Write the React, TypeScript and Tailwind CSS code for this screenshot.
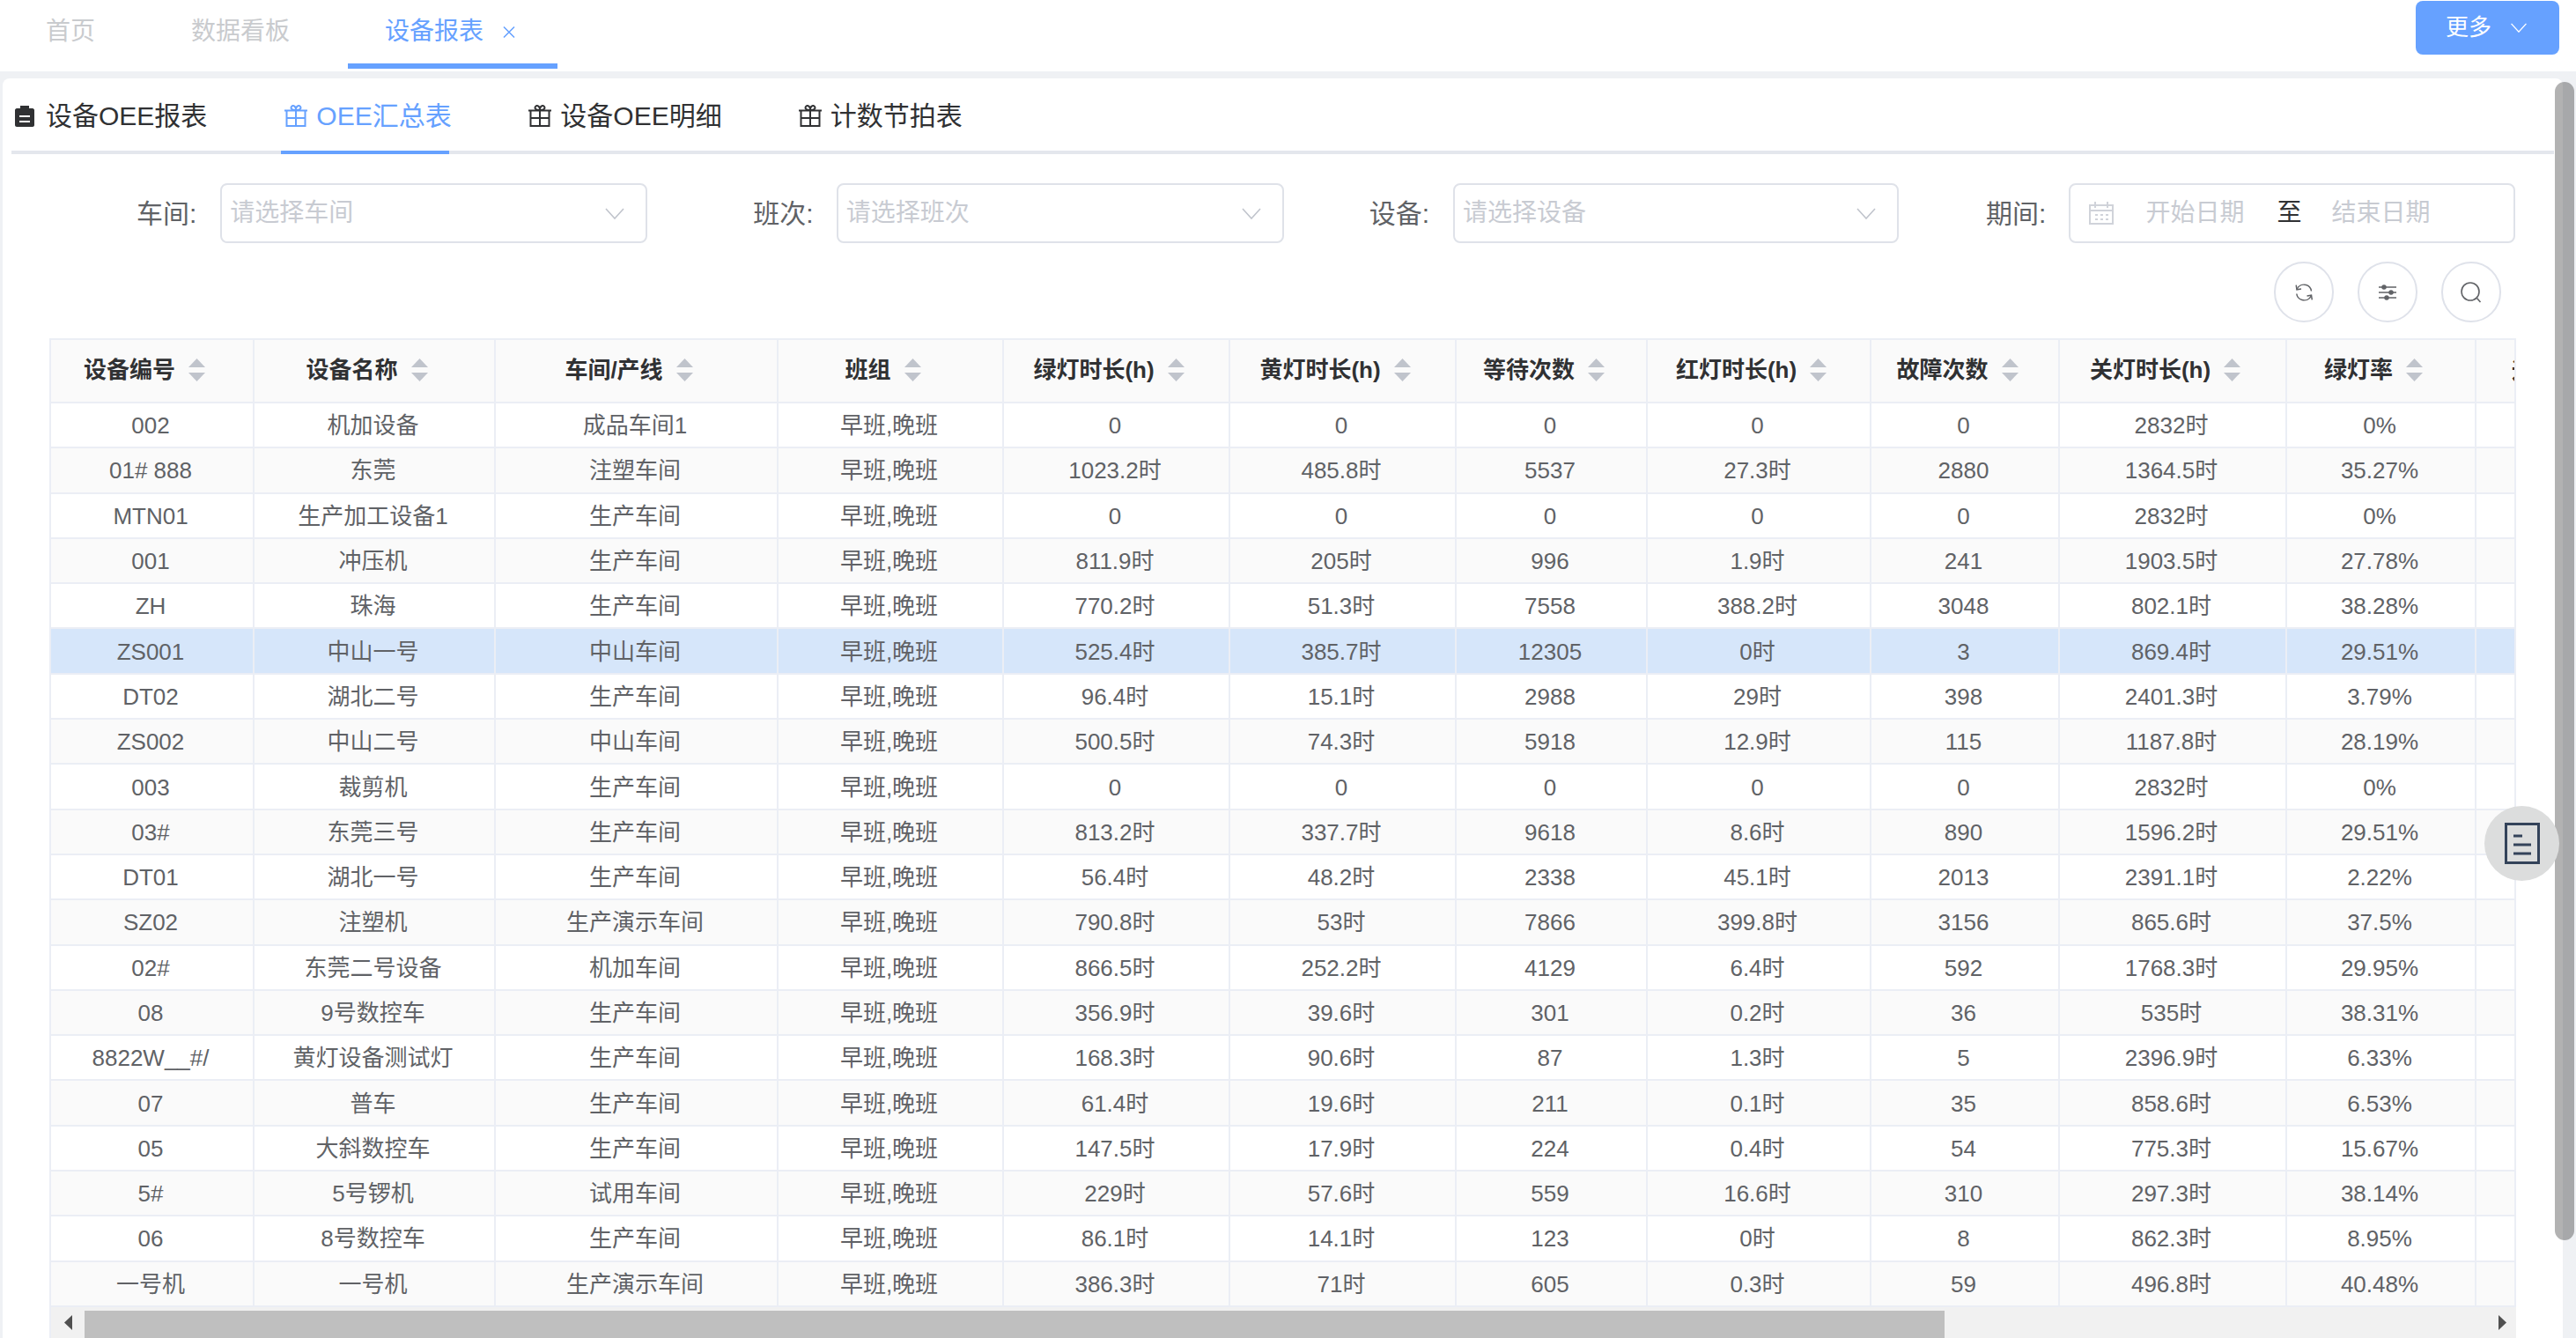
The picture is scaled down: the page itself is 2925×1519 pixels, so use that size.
import React from "react";

const GRID =
  "grid grid-cols-[231px_274px_321px_256px_257px_257px_217px_254px_214px_258px_215px_45px]";

const HEADERS = [
  "设备编号",
  "设备名称",
  "车间/产线",
  "班组",
  "绿灯时长(h)",
  "黄灯时长(h)",
  "等待次数",
  "红灯时长(h)",
  "故障次数",
  "关灯时长(h)",
  "绿灯率",
];

const ROWS: string[][] = [
  ["002", "机加设备", "成品车间1", "早班,晚班", "0", "0", "0", "0", "0", "2832时", "0%"],
  ["01# 888", "东莞", "注塑车间", "早班,晚班", "1023.2时", "485.8时", "5537", "27.3时", "2880", "1364.5时", "35.27%"],
  ["MTN01", "生产加工设备1", "生产车间", "早班,晚班", "0", "0", "0", "0", "0", "2832时", "0%"],
  ["001", "冲压机", "生产车间", "早班,晚班", "811.9时", "205时", "996", "1.9时", "241", "1903.5时", "27.78%"],
  ["ZH", "珠海", "生产车间", "早班,晚班", "770.2时", "51.3时", "7558", "388.2时", "3048", "802.1时", "38.28%"],
  ["ZS001", "中山一号", "中山车间", "早班,晚班", "525.4时", "385.7时", "12305", "0时", "3", "869.4时", "29.51%"],
  ["DT02", "湖北二号", "生产车间", "早班,晚班", "96.4时", "15.1时", "2988", "29时", "398", "2401.3时", "3.79%"],
  ["ZS002", "中山二号", "中山车间", "早班,晚班", "500.5时", "74.3时", "5918", "12.9时", "115", "1187.8时", "28.19%"],
  ["003", "裁剪机", "生产车间", "早班,晚班", "0", "0", "0", "0", "0", "2832时", "0%"],
  ["03#", "东莞三号", "生产车间", "早班,晚班", "813.2时", "337.7时", "9618", "8.6时", "890", "1596.2时", "29.51%"],
  ["DT01", "湖北一号", "生产车间", "早班,晚班", "56.4时", "48.2时", "2338", "45.1时", "2013", "2391.1时", "2.22%"],
  ["SZ02", "注塑机", "生产演示车间", "早班,晚班", "790.8时", "53时", "7866", "399.8时", "3156", "865.6时", "37.5%"],
  ["02#", "东莞二号设备", "机加车间", "早班,晚班", "866.5时", "252.2时", "4129", "6.4时", "592", "1768.3时", "29.95%"],
  ["08", "9号数控车", "生产车间", "早班,晚班", "356.9时", "39.6时", "301", "0.2时", "36", "535时", "38.31%"],
  ["8822W__#/", "黄灯设备测试灯", "生产车间", "早班,晚班", "168.3时", "90.6时", "87", "1.3时", "5", "2396.9时", "6.33%"],
  ["07", "普车", "生产车间", "早班,晚班", "61.4时", "19.6时", "211", "0.1时", "35", "858.6时", "6.53%"],
  ["05", "大斜数控车", "生产车间", "早班,晚班", "147.5时", "17.9时", "224", "0.4时", "54", "775.3时", "15.67%"],
  ["5#", "5号锣机", "试用车间", "早班,晚班", "229时", "57.6时", "559", "16.6时", "310", "297.3时", "38.14%"],
  ["06", "8号数控车", "生产车间", "早班,晚班", "86.1时", "14.1时", "123", "0时", "8", "862.3时", "8.95%"],
  ["一号机", "一号机", "生产演示车间", "早班,晚班", "386.3时", "71时", "605", "0.3时", "59", "496.8时", "40.48%"],
];

function Chevron({ className }: { className: string }) {
  return (
    <svg viewBox="0 0 22 13" className={className} fill="none" stroke="currentColor" strokeWidth="1.6">
      <path d="M1 1 L11 12 L21 1" />
    </svg>
  );
}

function GiftIcon() {
  return (
    <svg viewBox="0 0 26 25" className="w-[26px] h-[25px] shrink-0" fill="none" stroke="currentColor" strokeWidth="2">
      <path d="M0 6.5H26M2.5 6.5V24H23.5V6.5M13 6.5V24M2.5 15H23.5" />
      <path d="M13 6C9.5 6 7.5 5 7.5 3.2C7.5 1.4 9.4 .5 11 1.3C12.4 2 13 3.6 13 6C13 3.6 13.6 2 15 1.3C16.6 .5 18.5 1.4 18.5 3.2C18.5 5 16.5 6 13 6Z" />
    </svg>
  );
}

function ClipIcon() {
  return (
    <svg viewBox="0 0 22 24" className="w-[22px] h-[24px] shrink-0">
      <path
        fill="#303133"
        d="M6 0H16V3H20C21 3 22 4 22 5V22C22 23 21 24 20 24H2C1 24 0 23 0 22V5C0 4 1 3 2 3H6Z"
      />
      <path fill="#fff" d="M5 11H17V13H5ZM5 17H17V19H5Z" />
    </svg>
  );
}

function SortCarets() {
  return (
    <span className="flex flex-col items-center gap-[6px] w-[49px] shrink-0">
      <svg viewBox="0 0 19 10" className="w-[19px] h-[10px]">
        <path d="M9.5 0L19 10H0Z" fill="#c0c4cc" />
      </svg>
      <svg viewBox="0 0 19 10" className="w-[19px] h-[10px]">
        <path d="M9.5 10L19 0H0Z" fill="#c0c4cc" />
      </svg>
    </span>
  );
}

function SelectBox({ placeholder, width }: { placeholder: string; width: string }) {
  return (
    <div
      className={`${width} h-[68px] shrink-0 rounded-lg border-2 border-[#dfe2e9] flex items-center justify-between pl-[9px] pr-[24px] text-[28px] text-[#c8cbd2]`}
    >
      <span>{placeholder}</span>
      <Chevron className="w-[22px] h-[13px] text-[#c0c4cc]" />
    </div>
  );
}

function CircleButton({ children }: { children: React.ReactNode }) {
  return (
    <button className="w-[68px] h-[69px] rounded-full border-2 border-[#dfe2ea] bg-white flex items-center justify-center text-[#606266]">
      {children}
    </button>
  );
}

export default function App() {
  return (
    <div className="relative w-[2925px] h-[1519px] overflow-hidden bg-[#eff1f4] flex flex-col font-['Liberation_Sans','Noto_Sans_CJK_SC',sans-serif]">
      {/* top tab bar */}
      <header className="h-[81px] shrink-0 bg-white flex items-start">
        <div className="flex items-center h-[72px] pl-[52px] text-[28px] text-[#c9cbce]">
          <span>首页</span>
          <span className="ml-[109px]">数据看板</span>
        </div>
        <div className="ml-[66px] w-[238px] h-[78px] border-b-[6px] border-[#66a1ff] flex items-center pl-[42px] text-[28px] text-[#66a1ff]">
          <span>设备报表</span>
          <svg viewBox="0 0 14 13" className="ml-[22px] w-[14px] h-[13px]" fill="none" stroke="currentColor" strokeWidth="1.5">
            <path d="M1 0.5L13 12.5M13 0.5L1 12.5" />
          </svg>
        </div>
        <button className="ml-auto mr-[19px] mt-px w-[163px] h-[61px] rounded-lg bg-[#66a1ff] text-white text-[26px] flex items-center pl-[34px]">
          <span>更多</span>
          <Chevron className="ml-[21px] w-[20px] h-[11px]" />
        </button>
      </header>

      {/* main card */}
      <main className="mt-[8px] ml-[3px] w-[2907px] flex-1 min-h-0 bg-white rounded-t-lg flex flex-col">
        {/* sub tabs */}
        <nav className="mx-[10px] h-[86px] shrink-0 border-b-4 border-[#e4e7ed] flex text-[30px] text-[#303133] whitespace-nowrap">
          <div className="flex items-center gap-[13px] pl-[4px] pt-[3px]">
            <ClipIcon />
            <span>设备OEE报表</span>
          </div>
          <div className="ml-[84px] w-[191px] h-[86px] border-b-4 border-[#66a1ff] flex items-center gap-[10px] pl-[4px] pt-[3px] text-[#66a1ff]">
            <GiftIcon />
            <span>OEE汇总表</span>
          </div>
          <div className="ml-[90px] flex items-center gap-[10px] pt-[3px]">
            <GiftIcon />
            <span>设备OEE明细</span>
          </div>
          <div className="ml-[87px] flex items-center gap-[10px] pt-[3px]">
            <GiftIcon />
            <span>计数节拍表</span>
          </div>
        </nav>

        {/* filter form */}
        <section className="mt-[33px] h-[68px] shrink-0 flex items-center pl-[152px] text-[30px] text-[#606266] whitespace-nowrap">
          <label className="mr-[27px]">车间:</label>
          <SelectBox placeholder="请选择车间" width="w-[485px]" />
          <label className="ml-[120px] mr-[26px]">班次:</label>
          <SelectBox placeholder="请选择班次" width="w-[508px]" />
          <label className="ml-[97px] mr-[27px]">设备:</label>
          <SelectBox placeholder="请选择设备" width="w-[506px]" />
          <label className="ml-[99px] mr-[26px]">期间:</label>
          <div className="w-[507px] h-[68px] shrink-0 rounded-lg border-2 border-[#dfe2e9] flex items-center pl-[21px] text-[28px] text-[#c8cbd2]">
            <svg viewBox="0 0 28 26" className="w-[28px] h-[26px]" fill="none" stroke="#d0d3da" strokeWidth="2">
              <path d="M1 4H27V25H1ZM1 10H27M7 0V7M21 0V7" />
              <path d="M7 15H10M13 15H16M19 15H22M7 20H10M13 20H16M19 20H22" />
            </svg>
            <span className="ml-[36px]">开始日期</span>
            <span className="ml-[37px] text-[#303133]">至</span>
            <span className="ml-[34px]">结束日期</span>
          </div>
        </section>

        {/* toolbar */}
        <section className="mt-[21px] h-[69px] shrink-0 flex justify-end gap-[27px] pr-[70px]">
          <CircleButton>
            <svg viewBox="0 0 22 22" className="w-[22px] h-[22px]" fill="none" stroke="currentColor" strokeWidth="1.5">
              <path d="M3 7.5C5 3 9.5 1.5 13.5 2.5C16.5 3.3 19 6 19.5 9.5" />
              <path d="M19.5 14.5C17.5 19 13 20.5 9 19.5C6 18.7 3.2 16 2.8 12.5" />
              <path d="M2.2 2.6L3 7.8L8 7M20.3 19.4L19.5 14.2L14.5 15" />
            </svg>
          </CircleButton>
          <CircleButton>
            <svg viewBox="0 0 22 18" className="w-[22px] h-[18px]" fill="none" stroke="currentColor" strokeWidth="1.5">
              <path d="M1 3H21M1 9H21M1 15H21" />
              <circle cx="7" cy="3" r="2" fill="currentColor" />
              <circle cx="15" cy="9" r="2" fill="currentColor" />
              <circle cx="10" cy="15" r="2" fill="currentColor" />
            </svg>
          </CircleButton>
          <CircleButton>
            <svg viewBox="0 0 24 24" className="w-[24px] h-[24px]" fill="none" stroke="currentColor" strokeWidth="1.6">
              <circle cx="11" cy="11" r="10" />
              <path d="M18.5 18.5L22.5 23" />
            </svg>
          </CircleButton>
        </section>

        {/* table */}
        <section className="mt-[18px] ml-[53px] w-[2801px] flex-1 min-h-0 flex flex-col overflow-hidden border-l-2 border-t-2 border-[#ebeef5] text-[26px] text-[#606266]">
          <div className={`${GRID} h-[72px] shrink-0 bg-[#fafafa] border-b-2 border-[#ebeef5]`}>
            {HEADERS.map((h) => (
              <div key={h} className="flex items-center justify-center border-r-2 border-[#ebeef5] pb-[2px] pr-[2px] font-bold text-[#303133]">
                <span className="whitespace-nowrap">{h}</span>
                <SortCarets />
              </div>
            ))}
            <div className="flex items-center overflow-hidden pl-[40px] font-bold text-[#303133] border-r-2 border-[#ebeef5]">
              <span className="whitespace-nowrap">运行率</span>
            </div>
          </div>
          {ROWS.map((row, i) => {
            const bg = i === 5 ? "bg-[#d6e6fa]" : i % 2 === 1 ? "bg-[#fafafa]" : "bg-white";
            return (
              <div key={row[0] + i} className={`${GRID} h-[51.3px] shrink-0 border-b-2 border-[#ebeef5] ${bg}`}>
                {row.map((c, j) => (
                  <div key={j} className="flex items-center justify-center whitespace-nowrap border-r-2 border-[#ebeef5] pr-[3px] pt-[2px]">
                    {c}
                  </div>
                ))}
                <div className="border-r-2 border-[#ebeef5]" />
              </div>
            );
          })}
          <div className="flex-1 min-h-0 flex bg-[#f1f1f1] pt-[4px]">
            <div className="w-[38px] shrink-0 flex items-center pl-[15px] -mt-[4px]">
              <svg viewBox="0 0 9 17" className="w-[9px] h-[17px]">
                <path d="M9 0V17L0 8.5Z" fill="#505050" />
              </svg>
            </div>
            <div className="w-[2112px] shrink-0 bg-[#bfbfbf]" />
            <div className="flex-1 flex items-center justify-end pr-[11px] -mt-[4px]">
              <svg viewBox="0 0 9 17" className="w-[9px] h-[17px]">
                <path d="M0 0V17L9 8.5Z" fill="#505050" />
              </svg>
            </div>
          </div>
        </section>
      </main>

      {/* page scrollbar thumb */}
      <div className="absolute left-[2901px] top-[93px] w-[22px] h-[1315px] rounded-full bg-black/30" />

      {/* floating action button */}
      <button className="absolute left-[2821px] top-[915px] w-[85px] h-[85px] rounded-full bg-[#dcdddd] flex items-center justify-center">
        <svg viewBox="0 0 40 47" className="w-[40px] h-[47px]" fill="none" stroke="#34435a" strokeWidth="3">
          <path d="M1.5 1.5H38.5V45.5H1.5Z" />
          <path d="M10 15H20M10 25H30M10 35H30" />
        </svg>
      </button>
    </div>
  );
}
